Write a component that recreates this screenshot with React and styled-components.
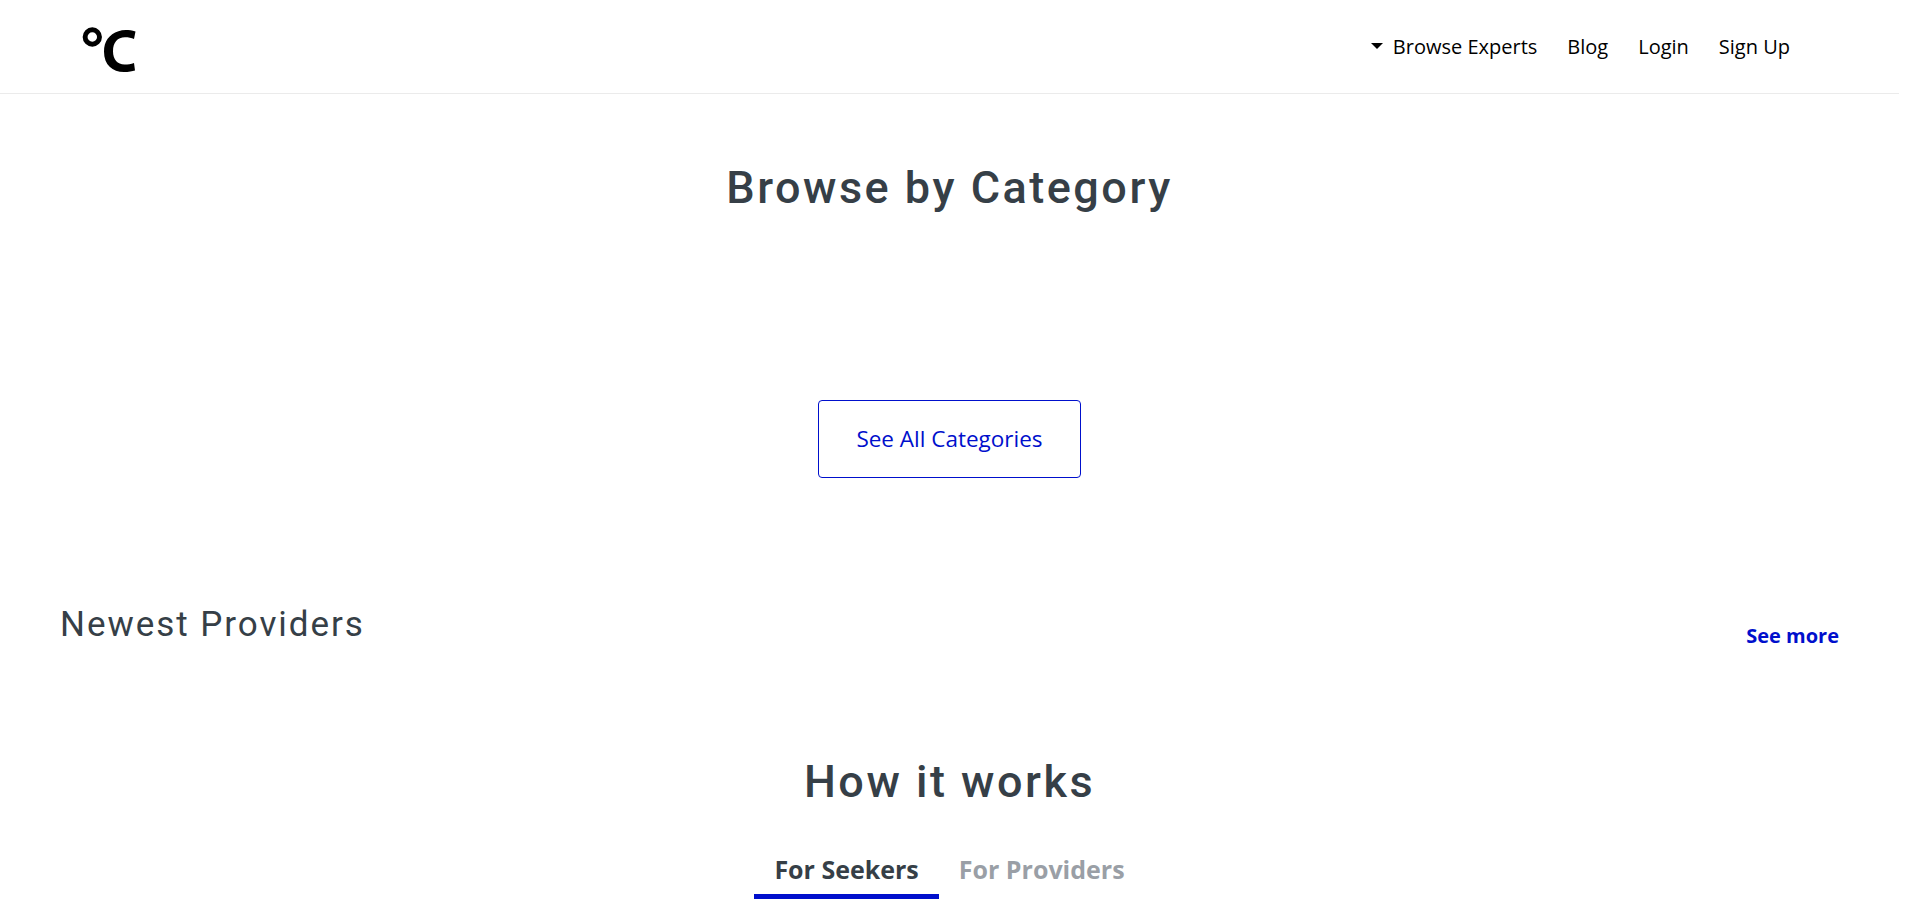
import React from "react";
import styled, { createGlobalStyle } from "styled-components";

const Global = createGlobalStyle`
  * { box-sizing: border-box; }
  html { overflow: hidden; }
  body { margin: 0; background: #fff; font-family: "Open Sans", sans-serif; color: #363f47; }
`;
const Page = styled.div`width: 1899px; height: 923px; overflow: hidden;`;
const Header = styled.header`
  height: 94px; display: flex; align-items: center; justify-content: space-between;
  padding: 0 109px 0 82px; border-bottom: 1px solid #ebebeb;
`;
const Logo = styled.svg`width: 55px; height: 46px; margin-top: 6px; display: block;`;
const Nav = styled.nav`display: flex; align-items: center; gap: 30px;`;
const NavLink = styled.a`
  font-size: 20px; line-height: 30px; color: #000; display: flex; align-items: center;
`;
const Caret = styled.span`
  border: 6px solid transparent; border-top-color: #000; border-bottom: 0; margin: -2px 10px 0 0;
`;
const Title = styled.h2`
  margin: 0; font: 500 45px/54px Roboto, sans-serif; letter-spacing: 2.5px; text-align: center;
`;
const Categories = styled.section`
  padding-top: 67px; display: flex; flex-direction: column; align-items: center;
`;
const Button = styled.button`
  margin-top: 185px; width: 263px; height: 78px; border: 1px solid #000fcc; border-radius: 4px;
  background: #fff; color: #000fcc; font: 400 22.5px "Open Sans", sans-serif; padding: 0 0 2px;
`;
const Providers = styled.section`
  margin-top: 122px; padding: 0 60px; display: flex; justify-content: space-between;
`;
const Subtitle = styled.h3`margin: 0; padding-top: 1px; font: 400 35px/48px Roboto, sans-serif; letter-spacing: 1.95px;`;
const More = styled.a`margin-top: 21px; font-size: 20px; line-height: 30px; font-weight: 700; color: #000fcc;`;
const Works = styled.section`margin-top: 104px;`;
const Tabs = styled.div`display: flex; justify-content: center; margin-top: 37px;`;
const Tab = styled.div`
  height: 53px; padding: 0 20px; font-size: 25px; line-height: 46px; font-weight: 700;
  color: ${(p) => (p.$active ? "#363f47" : "#9a9fa6")};
  border-bottom: 5px solid ${(p) => (p.$active ? "#000fcc" : "transparent")};
`;

export default function App() {
  return (
    <Page>
      <Global />
      <Header>
        <Logo viewBox="0 0 55 46">
          <circle cx="10.3" cy="10" r="7.2" fill="none" stroke="#000" strokeWidth="4.9" />
          <path d="M53.5 4.5C47 2.7 41 2.7 36.5 4.2C27 7.3 22 14.5 22 24.5C22 38 30.5 45 42 45C46.5 45 50.5 44.4 53 43.5L52 36C49 37 46 37.5 42.5 37.5C35.5 37.5 31 32.5 31 24.3C31 15.5 35.5 10.3 43 10.3C46.5 10.3 49.5 10.9 52 12Z" />
        </Logo>
        <Nav>
          <NavLink><Caret />Browse Experts</NavLink>
          <NavLink>Blog</NavLink>
          <NavLink>Login</NavLink>
          <NavLink>Sign Up</NavLink>
        </Nav>
      </Header>
      <Categories>
        <Title>Browse by Category</Title>
        <Button>See All Categories</Button>
      </Categories>
      <Providers>
        <Subtitle>Newest Providers</Subtitle>
        <More>See more</More>
      </Providers>
      <Works>
        <Title>How it works</Title>
        <Tabs>
          <Tab $active>For Seekers</Tab>
          <Tab>For Providers</Tab>
        </Tabs>
      </Works>
    </Page>
  );
}
